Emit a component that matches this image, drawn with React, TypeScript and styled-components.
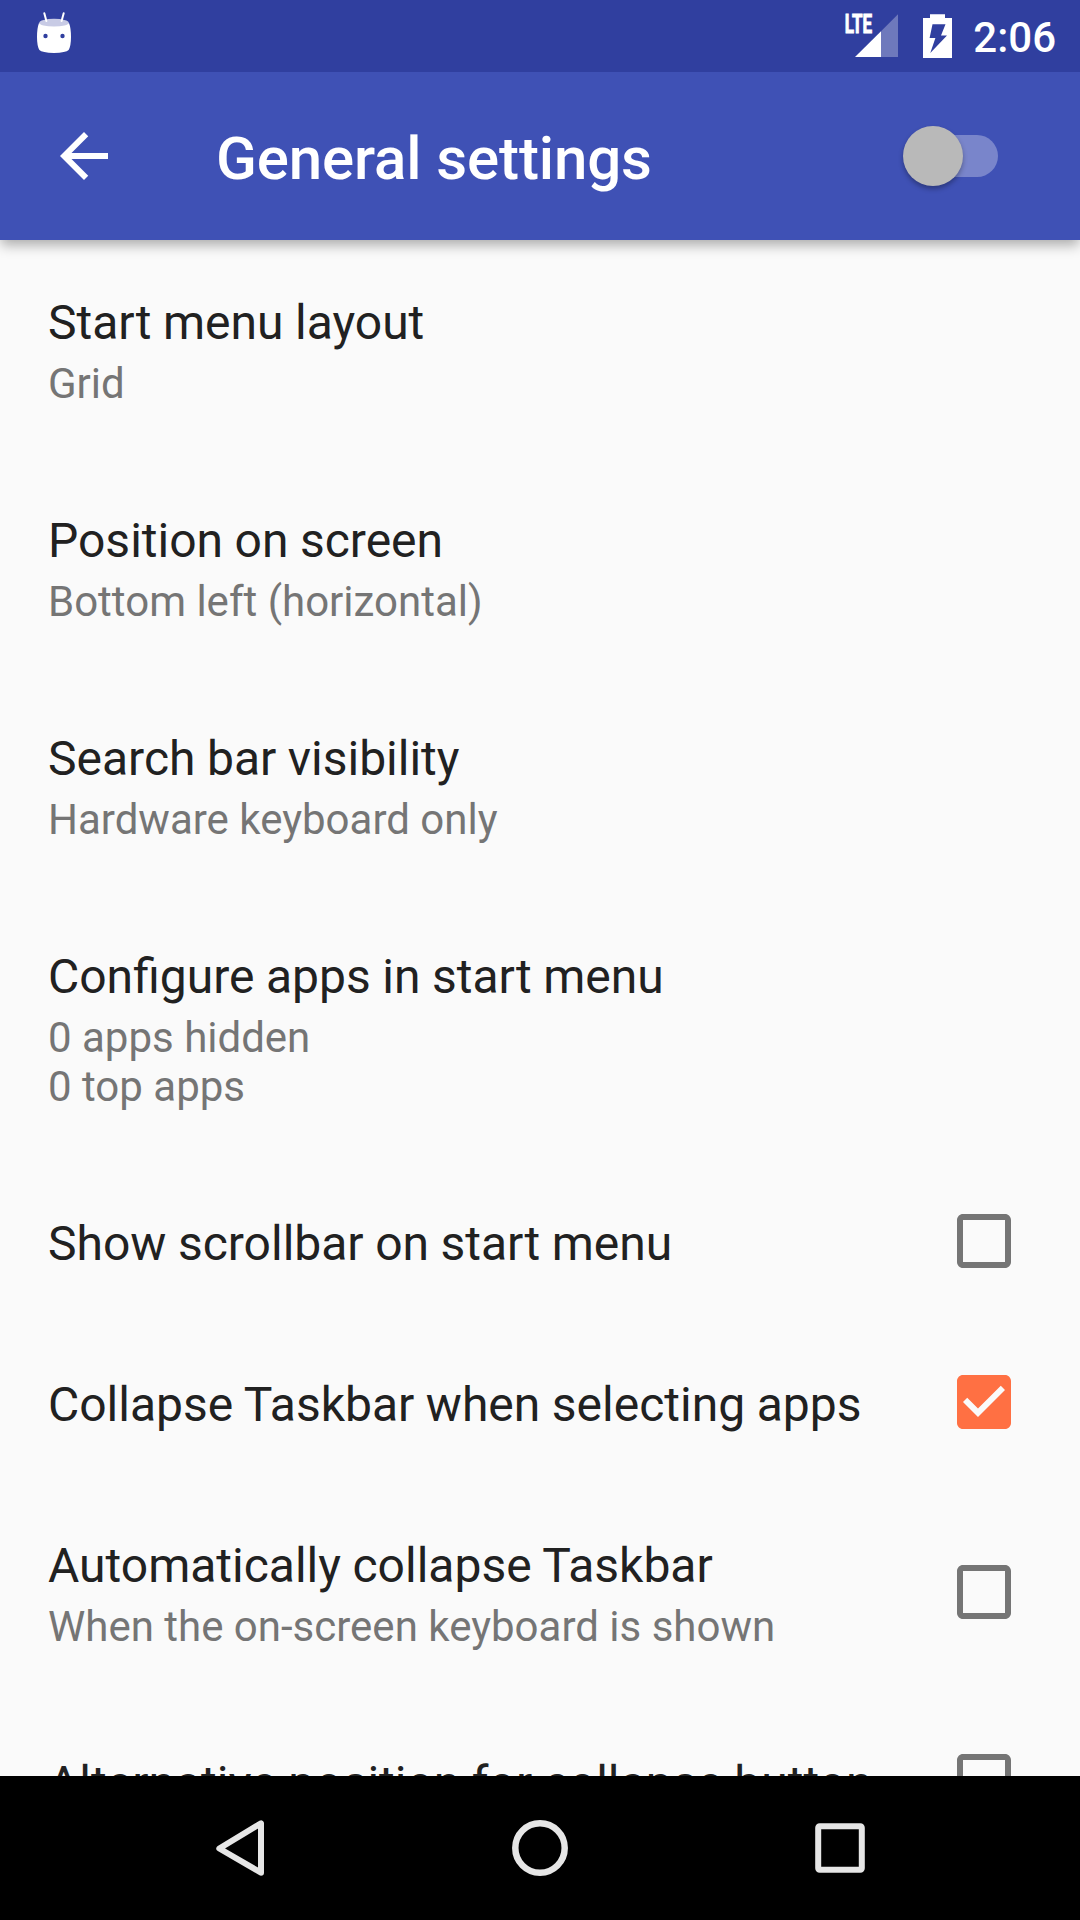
import React, { useState } from 'react';
import styled, { createGlobalStyle } from 'styled-components';

const GlobalStyle = createGlobalStyle`
  * { box-sizing: border-box; }
  html, body { margin: 0; padding: 0; }
  body {
    background: #fafafa;
    font-family: Roboto, "Noto Sans", sans-serif;
    overflow: hidden;
  }
`;

const Screen = styled.div`
  display: flex;
  flex-direction: column;
  width: 1080px;
  height: 1920px;
  background: #fafafa;
  overflow: hidden;
`;

const StatusBar = styled.div`
  display: flex;
  flex: none;
  align-items: center;
  justify-content: space-between;
  height: 72px;
  padding: 0 24px 0 36px;
  background: #303f9f;
  z-index: 2;
`;

const StatusIcons = styled.div`
  display: flex;
  align-items: center;
  height: 72px;
`;

const StatusGlyph = styled.svg<{ $gap?: number }>`
  display: block;
  flex: none;
  margin-right: ${(p) => p.$gap ?? 0}px;
`;

const Clock = styled.span`
  color: #fff;
  font-size: 42px;
  font-weight: 500;
  line-height: 50px;
  padding-top: 4px;
`;

const AppBar = styled.header`
  display: flex;
  flex: none;
  align-items: center;
  height: 168px;
  padding: 0 82px 0 48px;
  background: #3f51b5;
  box-shadow: 0 6px 12px -1px rgba(0, 0, 0, 0.32);
  z-index: 1;
`;

const BackButton = styled.button`
  display: flex;
  width: 72px;
  height: 72px;
  margin-right: 96px;
  padding: 0;
  border: 0;
  background: none;
`;

const Title = styled.h1`
  flex: 1;
  margin: 0;
  padding-top: 6px;
  color: #fff;
  font-size: 60px;
  font-weight: 500;
  letter-spacing: -0.12px;
  line-height: 70px;
`;

const Track = styled.button`
  display: flex;
  align-items: center;
  width: 90px;
  height: 42px;
  padding: 0;
  border: 0;
  border-radius: 21px;
  background: rgba(255, 255, 255, 0.3);
`;

const Thumb = styled.span<{ $on: boolean }>`
  flex: none;
  width: 60px;
  height: 60px;
  margin-top: -1px;
  margin-left: ${(p) => (p.$on ? 36 : -5.5)}px;
  border-radius: 50%;
  background: ${(p) => (p.$on ? '#ff7043' : '#b9b9b9')};
  box-shadow: 0 3px 5px rgba(0, 0, 0, 0.3);
`;

const List = styled.main`
  display: flex;
  flex: 1;
  flex-direction: column;
  min-height: 0;
  overflow: hidden;
`;

const Row = styled.section`
  display: flex;
  flex: none;
  align-items: center;
  padding-right: 60px;
`;

const RowText = styled.div`
  flex: 1;
  padding: 55px 0 50px 48px;
`;

const RowTitle = styled.div`
  color: #212121;
  font-size: 48px;
  word-spacing: -0.4px;
  line-height: 56px;
  white-space: nowrap;
`;

const Summary = styled.div`
  margin-top: 8px;
  color: #757575;
  font-size: 42px;
  line-height: 49px;
  white-space: pre-line;
`;

const CheckIcon = styled.svg<{ $compact: boolean }>`
  display: block;
  flex: none;
  width: 72px;
  height: 72px;
  margin-bottom: ${(p) => (p.$compact ? 1 : 0)}px;
`;

const NavBar = styled.nav`
  display: flex;
  flex: none;
  align-items: center;
  justify-content: center;
  gap: 228px;
  height: 144px;
  background: #000;
`;

const NavIcon = styled.svg`
  display: block;
  width: 72px;
  height: 72px;
  fill: none;
  stroke: #e6e6e6;
`;

interface Setting {
  title: string;
  summary?: string;
  checked?: boolean;
}

const settings: Setting[] = [
  { title: 'Start menu layout', summary: 'Grid' },
  { title: 'Position on screen', summary: 'Bottom left (horizontal)' },
  { title: 'Search bar visibility', summary: 'Hardware keyboard only' },
  { title: 'Configure apps in start menu', summary: '0 apps hidden\n0 top apps' },
  { title: 'Show scrollbar on start menu', checked: false },
  { title: 'Collapse Taskbar when selecting apps', checked: true },
  {
    title: 'Automatically collapse Taskbar',
    summary: 'When the on-screen keyboard is shown',
    checked: false,
  },
  { title: 'Alternative position for collapse button', checked: false },
];

function Checkbox({ checked, compact }: { checked: boolean; compact: boolean }) {
  return (
    <CheckIcon viewBox="0 0 24 24" fill={checked ? '#ff7043' : '#757575'} $compact={compact}>
      {checked ? (
        <path d="M19 3H5c-1.1 0-2 .9-2 2v14c0 1.1.9 2 2 2h14c1.1 0 2-.9 2-2V5c0-1.1-.9-2-2-2zM10 17l-5-5 1.41-1.41L10 14.17l7.59-7.59L19 8z" />
      ) : (
        <path d="M19 5v14H5V5h14m0-2H5c-1.1 0-2 .9-2 2v14c0 1.1.9 2 2 2h14c1.1 0 2-.9 2-2V5c0-1.1-.9-2-2-2z" />
      )}
    </CheckIcon>
  );
}

function MarshmallowIcon() {
  return (
    <StatusGlyph width="36" height="72" viewBox="36 0 36 72">
      <path d="M39 23Q54 29 69 23Q71 28 71 37Q71 46 68.6 50Q66 52.8 54 52.9Q42 52.8 39.4 50Q37 46 37 37Q37 28 39 23Z" fill="#fff" />
      <ellipse cx="54" cy="22.7" rx="14.8" ry="3.9" fill="#c8cbe5" />
      <path d="M44.3 13.3L46.4 21M63.7 13.3L61.6 21" stroke="#fff" strokeWidth="2" strokeLinecap="round" />
      <circle cx="45.5" cy="36" r="2.2" fill="#303f9f" />
      <circle cx="62.5" cy="36" r="2.2" fill="#303f9f" />
    </StatusGlyph>
  );
}

function SignalIcon() {
  return (
    <StatusGlyph width="56" height="72" viewBox="844 0 56 72" $gap={23}>
      <path d="M881 31.3L898 14.3V57H881Z" fill="#fff" fillOpacity="0.3" />
      <path d="M855 57L881 31.3V57Z" fill="#fff" />
      <text
        x="844.7"
        y="33.3"
        fill="#fff"
        stroke="#fff"
        strokeWidth="0.9"
        fontSize="25"
        fontWeight="700"
        textLength="27.5"
        lengthAdjust="spacingAndGlyphs"
      >
        LTE
      </text>
    </StatusGlyph>
  );
}

function BatteryIcon() {
  return (
    <StatusGlyph width="29" height="72" viewBox="923 0 29 72" $gap={21}>
      <path
        fillRule="evenodd"
        fill="#fff"
        d="M930 14.3H945V18H952V58H923V18H930ZM932.5 24.3L929.6 38H935.4L930.3 53L947 35.6H941L945.5 24.3Z"
      />
    </StatusGlyph>
  );
}

export default function App() {
  const [enabled, setEnabled] = useState(false);
  return (
    <>
      <GlobalStyle />
      <Screen>
        <StatusBar>
          <MarshmallowIcon />
          <StatusIcons>
            <SignalIcon />
            <BatteryIcon />
            <Clock>2:06</Clock>
          </StatusIcons>
        </StatusBar>
        <AppBar>
          <BackButton aria-label="Back">
            <svg width="72" height="72" viewBox="0 0 24 24" fill="#fff">
              <path d="M20 11H7.83l5.59-5.59L12 4l-8 8 8 8 1.41-1.41L7.83 13H20v-2z" />
            </svg>
          </BackButton>
          <Title>General settings</Title>
          <Track aria-label="Enabled" onClick={() => setEnabled(!enabled)}>
            <Thumb $on={enabled} />
          </Track>
        </AppBar>
        <List>
          {settings.map((s) => (
            <Row key={s.title}>
              <RowText>
                <RowTitle>{s.title}</RowTitle>
                {s.summary && <Summary>{s.summary}</Summary>}
              </RowText>
              {s.checked !== undefined && <Checkbox checked={s.checked} compact={!s.summary} />}
            </Row>
          ))}
        </List>
        <NavBar>
          <NavIcon viewBox="204 1812 72 72" strokeWidth="6" strokeLinejoin="round">
            <path d="M261 1823.3V1872.7L219.3 1848.5Z" />
          </NavIcon>
          <NavIcon viewBox="504 1812 72 72" strokeWidth="6.5">
            <circle cx="540" cy="1848" r="24.7" />
          </NavIcon>
          <NavIcon viewBox="804 1812 72 72" strokeWidth="6">
            <rect x="818.2" y="1826.2" width="43.6" height="43.6" rx="1.5" />
          </NavIcon>
        </NavBar>
      </Screen>
    </>
  );
}
